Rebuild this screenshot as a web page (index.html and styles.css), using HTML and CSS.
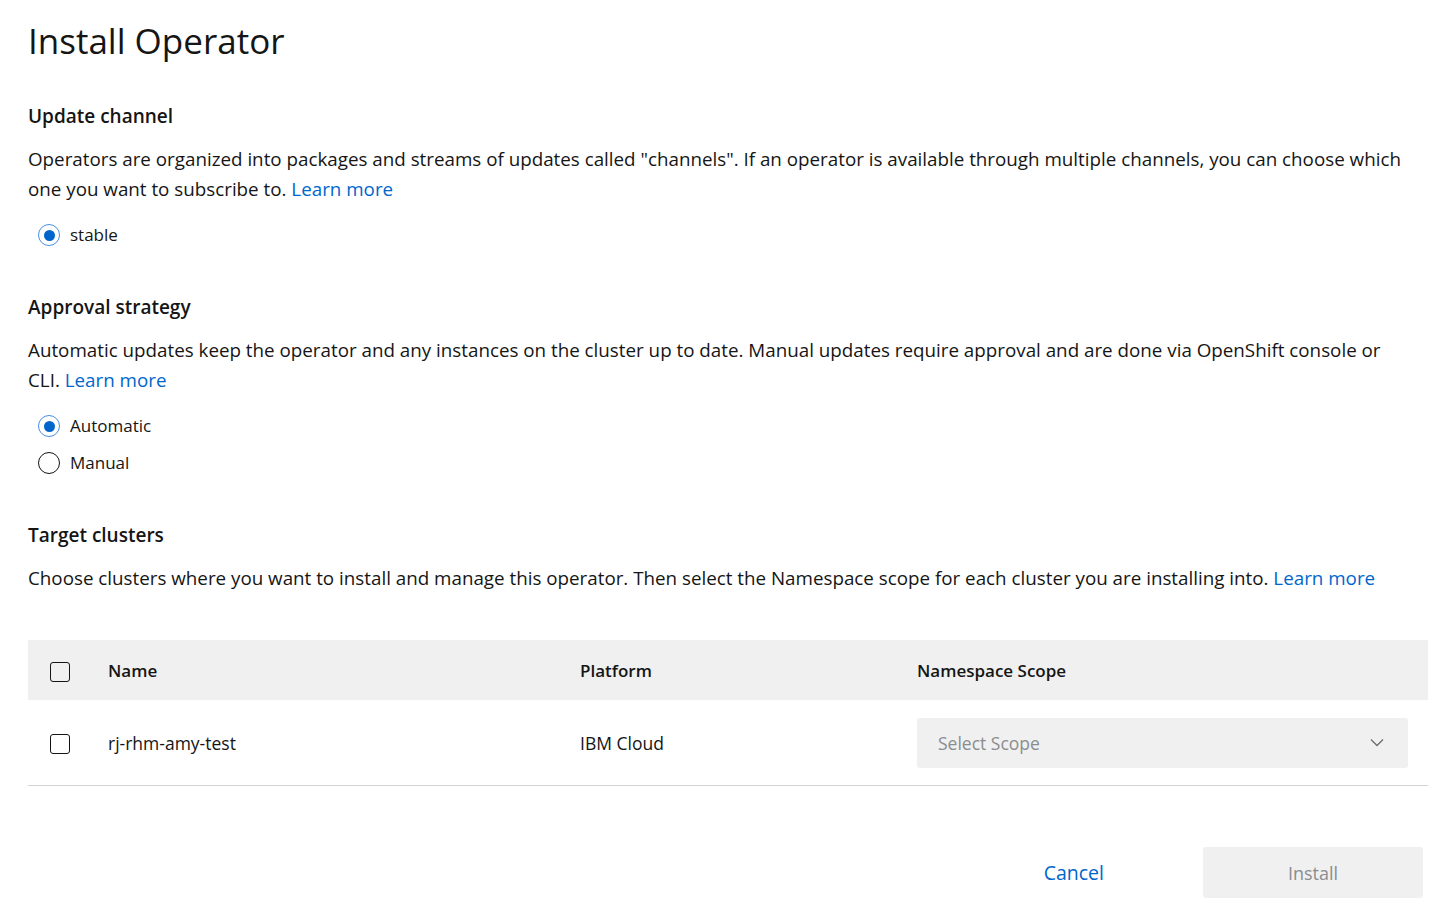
FILE: index.html
```html
<!DOCTYPE html>
<html>
<head>
<meta charset="utf-8">
<link rel="stylesheet" href="styles.css">
</head>
<body>
<main class="page">
  <h1 class="title">Install Operator</h1>

  <section class="section">
    <h2 class="section-title">Update channel</h2>
    <p class="desc">Operators are organized into packages and streams of updates called "channels". If an operator is available through multiple channels, you can choose which one you want to subscribe to. <a class="link" href="#">Learn more</a></p>
    <div class="radios">
      <label class="radio"><span class="dot checked"></span><span>stable</span></label>
    </div>
  </section>

  <section class="section">
    <h2 class="section-title">Approval strategy</h2>
    <p class="desc">Automatic updates keep the operator and any instances on the cluster up to date. Manual updates require approval and are done via OpenShift console or<br>CLI. <a class="link" href="#">Learn more</a></p>
    <div class="radios">
      <label class="radio"><span class="dot checked"></span><span>Automatic</span></label>
      <label class="radio"><span class="dot"></span><span>Manual</span></label>
    </div>
  </section>

  <section class="section">
    <h2 class="section-title">Target clusters</h2>
    <p class="desc">Choose clusters where you want to install and manage this operator. Then select the Namespace scope for each cluster you are installing into. <a class="link" href="#">Learn more</a></p>
  </section>

  <div class="table">
    <div class="row head">
      <div class="cell check"><span class="box"></span></div>
      <div class="cell name">Name</div>
      <div class="cell platform">Platform</div>
      <div class="cell scope">Namespace Scope</div>
    </div>
    <div class="row body">
      <div class="cell check"><span class="box"></span></div>
      <div class="cell name">rj-rhm-amy-test</div>
      <div class="cell platform">IBM Cloud</div>
      <div class="cell scope">
        <div class="select">
          <span>Select Scope</span>
          <svg width="14" height="9" viewBox="0 0 14 9"><path d="M1 1.5 L7 7.5 L13 1.5" fill="none" stroke="#6a6e73" stroke-width="1.3"/></svg>
        </div>
      </div>
    </div>
  </div>

  <div class="actions">
    <button class="btn-link">Cancel</button>
    <button class="btn-primary">Install</button>
  </div>
</main>
</body>
</html>
```

FILE: styles.css
```css
* { box-sizing: border-box; }
body {
  margin: 0;
  background: #fff;
  color: #151515;
  font-family: "Open Sans", "Noto Sans", sans-serif;
}
.page {
  padding: 18px 13px 0 28px;
}
.title {
  margin: 0;
  font-family: "Open Sans", sans-serif;
  font-size: 35px;
  font-weight: 500;
  line-height: 46px;
  letter-spacing: 0;
}
.section {
  margin-top: 39px;
}
.section + .section { margin-top: 47px; }
.section-title {
  margin: 0;
  font-size: 19px;
  font-weight: 600;
  line-height: 26px;
}
.desc {
  margin: 15px 0 0;
  font-size: 18.8px;
  line-height: 30px;
}
.link { color: #0066cc; text-decoration: none; }
.radios {
  margin-top: 19px;
  padding-left: 10px;
  display: flex;
  flex-direction: column;
  gap: 13px;
}
.radio {
  display: flex;
  align-items: center;
  gap: 10px;
  font-size: 17px;
  line-height: 24px;
}
.dot {
  width: 22px;
  height: 22px;
  border-radius: 50%;
  border: 1.5px solid #151515;
  display: inline-flex;
  align-items: center;
  justify-content: center;
}
.dot.checked { border-color: #4a90e2; }
.dot.checked::after {
  content: "";
  width: 11px;
  height: 11px;
  border-radius: 50%;
  background: #0066cc;
}
.table {
  margin-top: 47px;
  border-bottom: 1px solid #d2d2d2;
}
.row {
  display: grid;
  grid-template-columns: 80px 472px 337px 1fr;
  align-items: center;
}
.row.head { background: #f0f0f0; height: 60px; font-weight: 600; font-size: 17px; }
.row.body { height: 85px; font-size: 17.5px; }
.cell.check { padding-left: 22px; display: flex; align-items: center; }
.box {
  width: 20px;
  height: 20px;
  border: 1.5px solid #151515;
  border-radius: 3px;
  display: inline-block;
}
.row.head .box { margin-top: 3px; }
.row.body .box { margin-top: 2px; }
.cell.scope { padding-right: 20px; }
.select {
  height: 50px;
  background: #f0f0f0;
  border-radius: 3px;
  display: flex;
  align-items: center;
  justify-content: space-between;
  padding: 0 24px 0 21px;
  color: #8a8d90;
  font-size: 17.5px;
}
.actions {
  display: flex;
  justify-content: flex-end;
  align-items: center;
  gap: 99px;
  margin-top: 61px;
  padding-right: 5px;
}
button {
  font-family: inherit;
  font-size: 18px;
  border: none;
  cursor: pointer;
}
.btn-link {
  background: none;
  color: #0066cc;
  padding: 0;
  font-size: 19.5px;
}
.btn-primary {
  width: 220px;
  height: 51px;
  background: #f0f0f0;
  color: #8a8d90;
  border-radius: 3px;
}
```
